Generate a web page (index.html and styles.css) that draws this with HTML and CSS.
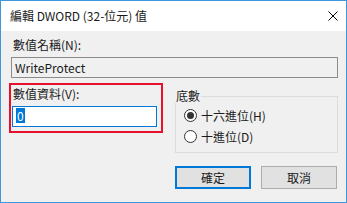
FILE: index.html
```html
<!DOCTYPE html>
<html lang="zh-Hant">
<head>
  <meta charset="UTF-8">
  <title>編輯 DWORD (32-位元) 值</title>
  <link rel="stylesheet" href="styles.css">
</head>
<body>

<div class="dialog">
  <!-- title bar -->
  <div class="title-bar">
    <span class="title">編輯 DWORD (32-位元) 值</span>
    <button class="close-btn" aria-label="關閉">
      <svg width="10" height="10" viewBox="0 0 10 10">
        <path d="M0.5 0.5 L9.5 9.5 M9.5 0.5 L0.5 9.5" stroke="#000" stroke-width="1" fill="none"/>
      </svg>
    </button>
  </div>

  <div class="dialog-body">
    <div class="field-label">數值名稱(N):</div>
    <div class="text-box readonly">WriteProtect</div>

    <div class="middle-row">
      <div class="highlight">
        <div class="field-label">數值資料(V):</div>
        <div class="text-box focused"><span class="selected">0</span></div>
      </div>

      <fieldset class="group-box">
        <legend>底數</legend>
        <label class="radio-row">
          <span class="radio checked"></span>十六進位(H)
        </label>
        <label class="radio-row">
          <span class="radio"></span>十進位(D)
        </label>
      </fieldset>
    </div>

    <div class="button-row">
      <button class="btn default">確定</button>
      <button class="btn">取消</button>
    </div>
  </div>
</div>

</body>
</html>
```

FILE: styles.css
```css
body {
  margin: 0;
  background: #fff;
  font-family: "Segoe UI", "Noto Sans CJK TC", "Noto Sans", sans-serif;
  font-size: 12px;
  color: #1a1a1a;
}

/* Window frame */
.dialog {
  width: 347px;
  height: 203px;
  box-sizing: border-box;
  border: 1px solid #3f96db;
  background: #f0f0f0;
  display: flex;
  flex-direction: column;
}

.title-bar {
  height: 30px;
  background: #fff;
  display: flex;
  align-items: center;
  justify-content: space-between;
  padding: 0 0 0 9px;
}

.title {
  font-size: 12px;
  line-height: 16px;
}

.close-btn {
  width: 26px;
  height: 30px;
  border: none;
  background: transparent;
  padding: 0;
  display: flex;
  align-items: center;
  justify-content: center;
}

.dialog-body {
  padding: 6px 8px 0 10px;
}

.field-label {
  line-height: 16px;
  height: 16px;
  padding-left: 2px;
  margin-bottom: 4px;
}

/* Edit boxes */
.text-box {
  height: 21px;
  box-sizing: border-box;
  line-height: 19px;
  padding: 0 3px;
  border: 1px solid #8c8c8c;
  background: #f0f0f0;
}

.text-box.readonly {
  margin-bottom: 5px;
}

.text-box.focused {
  border-color: #0078d7;
  background: #fff;
  margin-left: 1px;
  margin-right: 4px;
  padding-top: 1px;
}

.selected {
  background: #0078d7;
  color: #fff;
  display: inline-block;
  line-height: 15px;
  padding: 0 1px;
  vertical-align: top;
}

.middle-row {
  display: flex;
  gap: 12px;
}

/* red annotation frame */
.highlight {
  width: 154px;
  height: 50px;
  box-sizing: border-box;
  margin-left: -2px;
  border: 2px solid #e8112d;
  padding: 1px 0 0 0;
}

/* Group box */
.group-box {
  margin: 6px 0 0 0;
  padding: 2px 0 0 8px;
  width: 163px;
  height: 64px;
  box-sizing: border-box;
  border: 1px solid #dcdcdc;
}

.group-box legend {
  padding: 0 1px;
  margin-left: -9px;
  line-height: 14px;
}

.radio-row {
  display: flex;
  align-items: center;
  height: 21px;
  line-height: 16px;
}

.radio {
  width: 13px;
  height: 13px;
  box-sizing: border-box;
  border: 1px solid #333;
  border-radius: 50%;
  background: #fff;
  margin-right: 4px;
  position: relative;
}

.radio.checked::after {
  content: "";
  position: absolute;
  left: 2px;
  top: 2px;
  width: 7px;
  height: 7px;
  border-radius: 50%;
  background: #333;
}

/* Buttons */
.button-row {
  display: flex;
  justify-content: flex-end;
  gap: 10px;
  margin-top: 13px;
  padding-right: 1px;
}

.btn {
  width: 76px;
  height: 23px;
  font-family: inherit;
  font-size: 12px;
  color: #1a1a1a;
  background: #e1e1e1;
  border: 1px solid #adadad;
  padding: 0;
}

.btn.default {
  border: 2px solid #0078d7;
}
```
